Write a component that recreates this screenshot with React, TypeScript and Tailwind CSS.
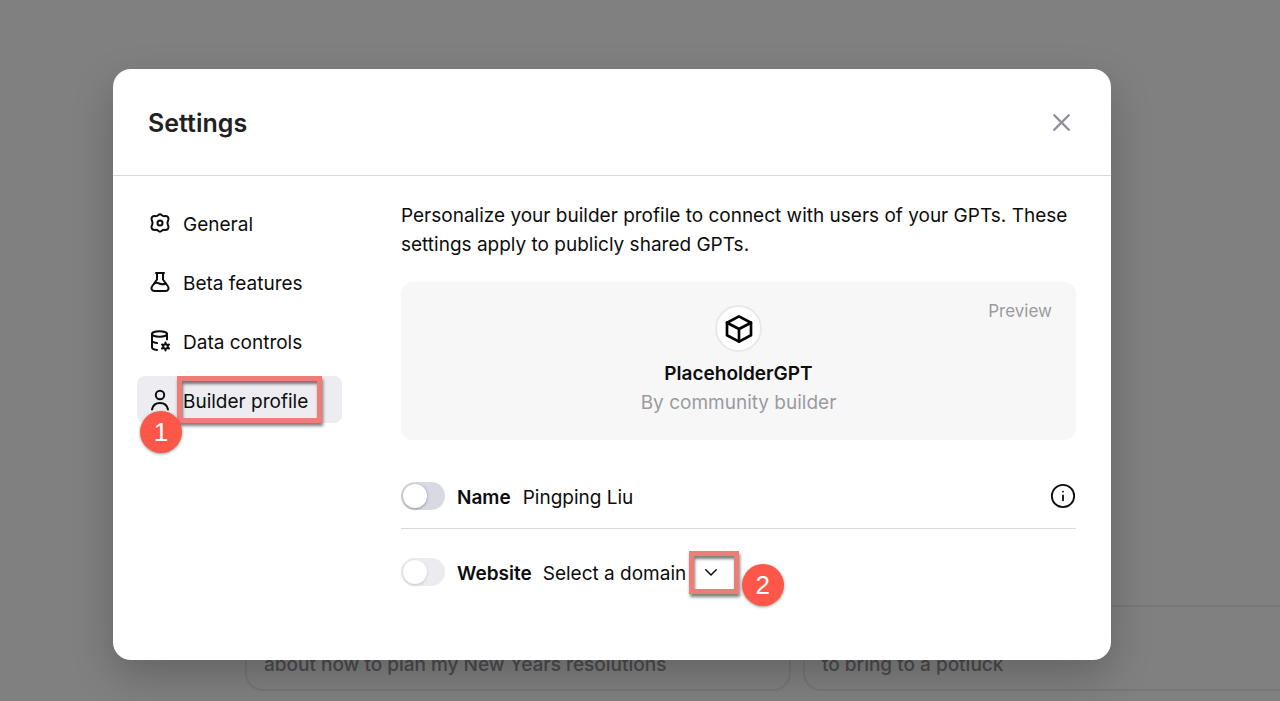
import type { ReactNode } from "react";
import { X } from "lucide-react";

function Icon({ children, className = "size-6", stroke = 2 }: { children: ReactNode; className?: string; stroke?: number }) {
  return (
    <svg
      viewBox="0 0 24 24"
      fill="none"
      stroke="currentColor"
      strokeWidth={stroke}
      strokeLinecap="round"
      strokeLinejoin="round"
      aria-hidden="true"
      className={`shrink-0 ${className}`}
    >
      {children}
    </svg>
  );
}

const GeneralIcon = () => (
  <Icon>
    <path d="M10.300 4.100Q12 2.400 13.700 4.100Q15 5.400 17 5.100Q19.800 4.800 20.400 7.300Q20.700 8.800 19.900 10Q19 12 19.900 14Q20.700 15.200 20.400 16.700Q19.800 19.200 17 18.900Q15 18.600 13.700 19.900Q12 21.600 10.300 19.900Q9 18.600 7 18.900Q4.200 19.200 3.600 16.700Q3.300 15.200 4.100 14Q5 12 4.100 10Q3.300 8.800 3.600 7.300Q4.200 4.800 7 5.100Q9 5.400 10.300 4.100Z" />
    <circle cx="12" cy="12" r="2.500" />
  </Icon>
);

const BetaIcon = () => (
  <Icon>
    <path d="M8 3h8M9 3v6.500L4.300 16c-1.700 2.300-.6 5 2.200 5h11c2.800 0 3.900-2.700 2.200-5L15 9.500V3" />
    <path d="M6.500 13.500c2.500-1.500 4-.3 5.500.3 1.600.6 3.500.8 5.500-.3" />
  </Icon>
);

const DataIcon = () => (
  <Icon>
    <ellipse cx="11.500" cy="5" rx="7.500" ry="2.700" />
    <path d="M4 5v13.500c0 1.200 2 2.100 5 2.400M4 11.500c0 1.200 2 2.100 5 2.500M19 5v5.500" />
    <circle cx="17.500" cy="17.500" r="2.300" />
    <path d="M17.500 13.500v1.200M17.500 20.300v1.200M14 15.500l1.100.6M19.900 18.900l1.100.6M14 19.500l1.100-.6M19.900 16.100l1.100-.6" />
  </Icon>
);

const ProfileIcon = () => (
  <Icon>
    <circle cx="12" cy="7" r="4.200" />
    <path d="M4 21.500c.8-4 4-6.500 8-6.500s7.200 2.500 8 6.500" />
  </Icon>
);

function Highlight({ className }: { className: string }) {
  return (
    <span
      aria-hidden="true"
      className={`pointer-events-none absolute border-5 border-[#ef7d77] shadow-[1px_3px_3px_rgba(0,0,0,0.5),inset_1px_3px_3px_rgba(0,0,0,0.5)] ${className}`}
    />
  );
}

function Step({ children, className }: { children: ReactNode; className: string }) {
  return (
    <span
      className={`pointer-events-none absolute flex size-[42px] items-center justify-center rounded-full bg-[#fd5749] font-['Liberation_Sans',sans-serif] text-[26px] leading-none text-white shadow-[0_1px_3px_rgba(0,0,0,0.4)] ${className}`}
    >
      {children}
    </span>
  );
}

const tabs = [
  { label: "General", icon: <GeneralIcon /> },
  { label: "Beta features", icon: <BetaIcon /> },
  { label: "Data controls", icon: <DataIcon /> },
  { label: "Builder profile", icon: <ProfileIcon />, active: true },
];

function Toggle({ id, label, disabled }: { id: string; label: string; disabled?: boolean }) {
  return (
    <input
      id={id}
      type="checkbox"
      role="switch"
      aria-label={label}
      disabled={disabled}
      className="relative h-7 w-11 shrink-0 appearance-none rounded-full bg-[#d9d9e3] before:absolute before:top-0.5 before:left-0.5 before:size-6 before:rounded-full before:bg-white before:shadow-[0_1px_3px_rgba(0,0,0,0.35)] checked:before:left-[18px] disabled:opacity-50"
    />
  );
}

export default function App() {
  return (
    <div className="relative flex min-h-screen flex-col justify-end overflow-hidden bg-[#808080] font-[Inter,sans-serif] text-[19px] text-[#0d0d0d]">
      <div className="flex gap-3 pb-2.5 pl-[245px] font-medium text-[#4b4b4d]">
        <div className="w-[546px] shrink-0 rounded-[18px] border-2 border-[#777777] px-[17px] pt-11 pb-2.5 leading-7">
          about how to plan my New Years resolutions
        </div>
        <div className="w-[546px] shrink-0 rounded-[18px] border-2 border-[#777777] px-[17px] pt-11 pb-2.5 leading-7">
          to bring to a potluck
        </div>
      </div>

      <div className="absolute inset-0 pt-[69px] pr-[169px] pl-[113px]">
        <section
          role="dialog"
          aria-labelledby="settings-title"
          className="rounded-[18px] bg-white pb-[72px] shadow-[0_16px_40px_rgba(0,0,0,0.22)]"
        >
          <header className="flex items-center justify-between border-b border-[#d9d9d9] px-[35px] py-9">
            <h1 id="settings-title" className="pt-0.5 text-[25px] leading-8 font-semibold text-[#202123]">
              Settings
            </h1>
            <button type="button" aria-label="Close" className="text-[#8e8ea0]">
              <X className="size-[29px]" strokeWidth={2} />
            </button>
          </header>

          <div className="flex gap-[59px] pt-[23px] pr-[35px] pl-6">
            <nav aria-label="Settings sections" className="flex w-[205px] shrink-0 flex-col gap-3">
              {tabs.map((tab) => (
                <button
                  key={tab.label}
                  type="button"
                  aria-current={tab.active ? "page" : undefined}
                  className={`relative flex h-[47px] items-center gap-[11px] rounded-lg px-[11px] text-left whitespace-nowrap ${tab.active ? "bg-[#ececf1]" : ""}`}
                >
                  {tab.icon}
                  <span className="pt-1 leading-7">{tab.label}</span>
                  {tab.active && (
                    <>
                      <Highlight className="top-0 left-10 h-[47px] w-[145px]" />
                      <Step className="top-[35px] left-[3px]">1</Step>
                    </>
                  )}
                </button>
              ))}
            </nav>

            <div className="min-w-0 grow pt-0.5">
              <p className="leading-[29px]">
                Personalize your builder profile to connect with users of your GPTs. These settings apply to publicly
                shared GPTs.
              </p>

              <div className="relative mt-[23px] flex flex-col items-center rounded-xl bg-[#f7f7f8] pt-[23px] pb-[23px] leading-[29px]">
                <span className="absolute top-[15px] right-6 text-[17px] text-[#9b9b9f]">Preview</span>
                <span className="flex size-[47px] items-center justify-center rounded-full border-2 border-[#e9e9eb] bg-white text-black">
                  <Icon className="size-8">
                    <path d="M12 2.500 21 7.300v9.400L12 21.500l-9-4.800V7.300Z" />
                    <path d="M3 7.300 12 12l9-4.700M12 12v9.500" />
                  </Icon>
                </span>
                <span className="mt-[7px] font-semibold">PlaceholderGPT</span>
                <span className="text-[#9b9b9f]">By community builder</span>
              </div>

              <div className="mt-[30px] flex items-center border-b border-[#d9d9d9] pt-2.5 pb-4">
                <Toggle id="show-name" label="Show name" />
                <label htmlFor="show-name" className="ml-3 pt-1 leading-7 font-semibold">
                  Name
                </label>
                <span className="ml-3 pt-1 leading-7">Pingping Liu</span>
                <button type="button" aria-label="About your name" className="ml-auto">
                  <Icon className="size-[26px]" stroke={1.7}>
                    <circle cx="12" cy="12" r="10.300" />
                    <path d="M12 11.500v4.500" />
                    <path d="M12 8v.010" />
                  </Icon>
                </button>
              </div>

              <div className="flex items-center pt-[27px]">
                <Toggle id="show-website" label="Show website" disabled />
                <label htmlFor="domain" className="ml-3 pt-1 leading-7 font-semibold">
                  Website
                </label>
                <div className="relative ml-[11px] flex items-center">
                  <select id="domain" className="appearance-none bg-transparent pt-1 pr-[52px] leading-7 outline-none">
                    <option>Select a domain</option>
                  </select>
                  <Icon className="pointer-events-none absolute right-[19px] size-[18px]">
                    <path d="m5 9 7 7 7-7" />
                  </Icon>
                  <Highlight className="right-0 h-[43px] w-[50px]" />
                  <Step className="top-2 left-full ml-[3px]">2</Step>
                </div>
              </div>
            </div>
          </div>
        </section>
      </div>
    </div>
  );
}
